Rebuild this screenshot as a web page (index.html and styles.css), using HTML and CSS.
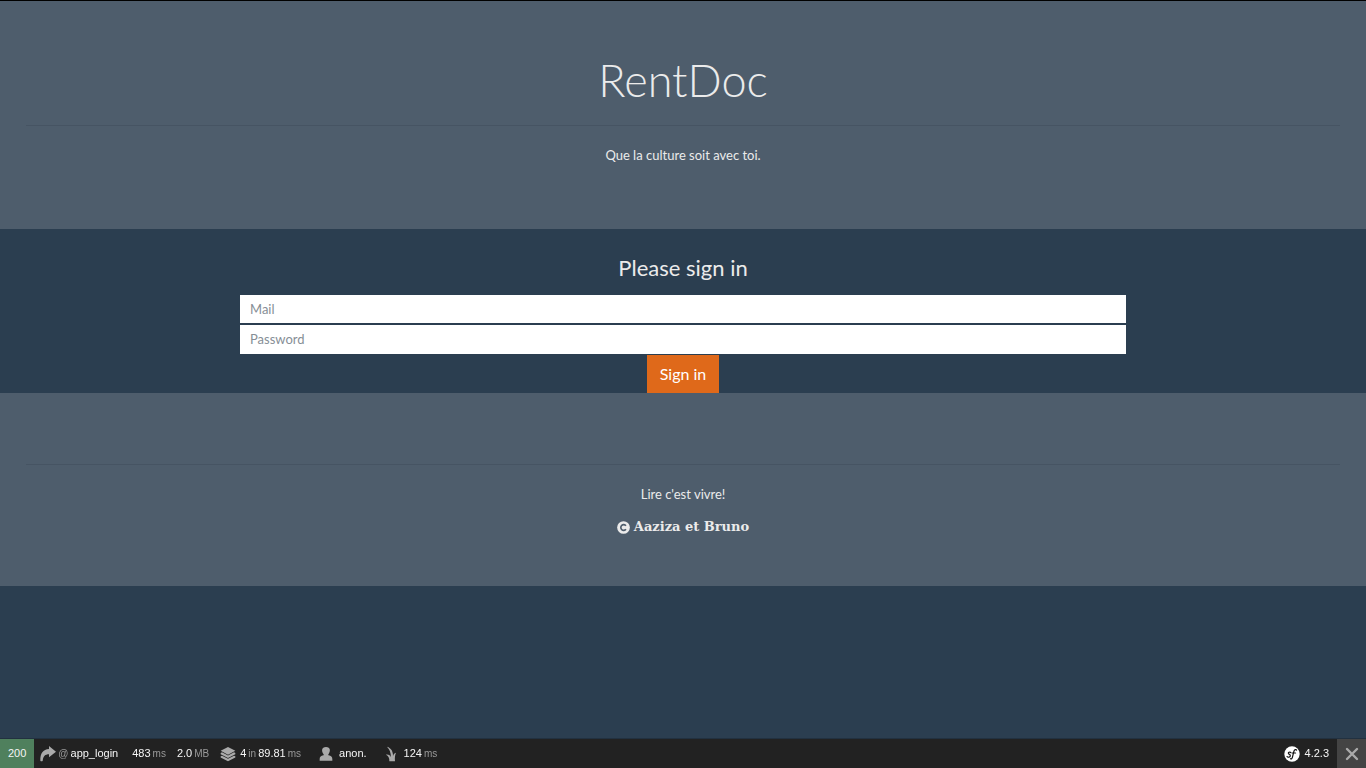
FILE: index.html
```html
<!DOCTYPE html>
<html lang="fr">
<head>
<meta charset="utf-8">
<meta name="viewport" content="width=device-width, initial-scale=1">
<title>RentDoc</title>
<link rel="stylesheet" href="styles.css">
</head>
<body>
<header class="banner banner-top">
  <h1 class="title">RentDoc</h1>
  <hr class="rule">
  <p class="lead">Que la culture soit avec toi.</p>
</header>
<main>
  <form class="signin">
    <h2 class="signin-title">Please sign in</h2>
    <input class="field" type="email" placeholder="Mail" aria-label="Mail">
    <input class="field" type="password" placeholder="Password" aria-label="Password">
    <button class="submit" type="submit">Sign in</button>
  </form>
</main>
<footer class="banner banner-bottom">
  <hr class="rule">
  <p class="lead">Lire c'est vivre!</p>
  <p class="credit">
    <svg class="copyright" viewBox="0 0 16 16" aria-hidden="true"><circle cx="8" cy="8" r="7.8" fill="currentColor"/><path d="M11 10.1A3.500 3.500 0 1 1 11 5.900" fill="none" stroke="#4e5d6c" stroke-width="2"/></svg>
    <span>Aaziza et Bruno</span>
  </p>
</footer>
<aside class="toolbar" aria-label="Debug toolbar">
  <a class="status" href="#">200</a>
  <a class="block route" href="#">
    <svg class="icon" viewBox="0 0 24 24" aria-hidden="true"><path fill="currentColor" d="M24 8.500 13.500 0v4.500C4.500 5 .2 11 .5 22c.7 1.400 3 1.400 3.600 0C4.800 15.500 7.500 12.500 13.500 12.500V17z"/></svg>
    <span class="unit">@</span><span>app_login</span>
  </a>
  <a class="block time" href="#"><span>483</span><span class="unit">ms</span></a>
  <a class="block memory" href="#"><span>2.0</span><span class="unit">MB</span></a>
  <a class="block cache" href="#">
    <svg class="icon" viewBox="0 0 24 24" aria-hidden="true"><g fill="currentColor"><path d="M12 1.500 1 7l11 6 11-6z"/><path d="m1 10.500 2-1L12 14.300l9-4.800 2 1v1.700l-11 5.800-11-5.800z"/><path d="m1 15.500 2-1 9 4.800 9-4.800 2 1v1.700L12 23 1 17.200z"/></g></svg>
    <span>4</span><span class="unit">in</span><span>89.81</span><span class="unit">ms</span>
  </a>
  <a class="block user" href="#">
    <svg class="icon" viewBox="0 0 24 24" aria-hidden="true"><path fill="currentColor" d="M2.500 22v-2.500c0-3 2-4.500 5.500-5.500.8-.3 1-1 .3-1.800C5 8 5 1.500 12 1.500s7 6.500 3.700 10.700c-.7.8-.5 1.500.3 1.800 3.500 1 5.500 2.500 5.500 5.500V22z"/></svg>
    <span>anon.</span>
  </a>
  <a class="block twig" href="#">
    <svg class="icon" viewBox="0 0 24 24" aria-hidden="true"><path fill="currentColor" d="M8 23c.3-5-1.500-8.500-5-10 3.500-.5 6 .8 7.200 3.500C10.500 10 8.500 5 4.500 1c6.500 2 9.500 7.500 9 14.500.5-3 2-5 4.500-5.500-1.500 3-2 7.500-1.500 13z"/></svg>
    <span>124</span><span class="unit">ms</span>
  </a>
  <a class="version" href="#">
    <svg class="logo" viewBox="0 0 24 24" aria-hidden="true"><circle cx="12" cy="12" r="11.500" fill="#fff"/><path d="M10.300 10C9 8.200 5.500 9.500 6.800 11.300c1 1.300 3 1.500 2.700 3.500-.3 2.200-3.900 2.800-4.900 1M18.800 6.300c-.5-1.800-3.400-1.200-4.200 2.500l-1.900 8c-.5 2.100-1.700 3-2.900 2.300M12.300 10.500h5" fill="none" stroke="#111" stroke-width="1.800" stroke-linecap="round"/></svg>
    <span>4.2.3</span>
  </a>
  <button class="close" type="button" aria-label="Close toolbar">
    <svg class="cross" viewBox="0 0 14 14" aria-hidden="true"><path d="m2 2 10 10M12 2 2 12" fill="none" stroke="currentColor" stroke-width="2.400" stroke-linecap="round"/></svg>
  </button>
</aside>
</body>
</html>
```
FILE: styles.css
```css
* {
  box-sizing: border-box;
}

body {
  margin: 0;
  border-top: 1px solid #000;
  background: #2b3e50;
  color: #ebebeb;
  font: 13px/20px Lato, sans-serif;
  text-align: center;
}

.banner {
  background: #4e5d6c;
  padding: 52px 26px;
}

.title {
  margin: 0;
  font-size: 45px;
  font-weight: 300;
  line-height: 56px;
}

.rule {
  margin: 17px 0 19px;
  border: 0;
  border-top: 1px solid #465463;
}

.lead {
  margin: 0 0 12px;
}

.banner-top {
  padding-top: 51px;
}

.banner-bottom {
  padding-top: 54px;
  padding-bottom: 49px;
}

.banner-bottom .lead {
  margin-bottom: 13px;
}

.credit {
  display: flex;
  align-items: center;
  justify-content: center;
  gap: 4px;
  margin: 0;
  font-family: "DejaVu Serif", serif;
  font-weight: bold;
}

.copyright {
  width: 13px;
  height: 13px;
}

.signin {
  display: flex;
  flex-direction: column;
  align-items: center;
  padding: 25px 240px 0;
}

.signin-title {
  margin: 0 0 13px;
  font-size: 22px;
  font-weight: 400;
  line-height: 28px;
}

.field {
  width: 100%;
  height: 28px;
  margin: 0 0 2px;
  padding: 4px 10px;
  border: 0;
  background: #fff;
  color: #2b3e50;
  font: inherit;
}

.field[type="password"] {
  height: 29px;
  margin-bottom: 1px;
  padding-bottom: 5px;
}

.field::placeholder {
  color: #868e96;
  opacity: 1;
}

.submit {
  padding: 7px 13px;
  border: 0;
  background: #df691a;
  color: #fff;
  font: 16px/24px Lato, sans-serif;
}

.toolbar {
  position: fixed;
  right: 0;
  bottom: 0;
  left: 0;
  display: flex;
  height: 29px;
  background: #222;
  box-shadow: 0 -1px 0 rgba(0, 0, 0, 0.2);
  color: #f5f5f5;
  font: 11px/29px "Liberation Sans", Arial, sans-serif;
}

.toolbar a {
  color: inherit;
  text-decoration: none;
}

.toolbar .status {
  padding: 0 8px;
  background: #4f805d;
}

.block {
  display: flex;
  align-items: center;
  gap: 2px;
  padding: 0 6px 0 5px;
}

.route {
  padding-left: 6px;
}

.time {
  margin-left: 3px;
}

.user {
  gap: 5px;
  margin-left: 6px;
}

.twig {
  margin-left: 6px;
}

.unit {
  color: #999;
  font-size: 10px;
}

.icon {
  width: 16px;
  height: 16px;
  color: #aaa;
}

.cache .icon,
.twig .icon {
  margin-right: 2px;
}

.version {
  display: flex;
  align-items: center;
  gap: 5px;
  margin-left: auto;
  padding: 0 8px;
}

.logo {
  width: 16px;
  height: 16px;
}

.close {
  display: flex;
  align-items: center;
  justify-content: center;
  width: 29px;
  padding: 0;
  border: 0;
  background: #444;
  color: #aaa;
}

.cross {
  width: 14px;
  height: 14px;
}
```
